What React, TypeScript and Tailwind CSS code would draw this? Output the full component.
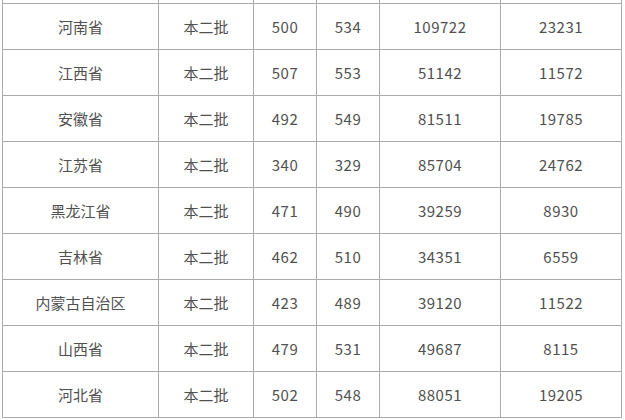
import React from "react";

const rows: string[][] = [
  ["河南省", "本二批", "500", "534", "109722", "23231"],
  ["江西省", "本二批", "507", "553", "51142", "11572"],
  ["安徽省", "本二批", "492", "549", "81511", "19785"],
  ["江苏省", "本二批", "340", "329", "85704", "24762"],
  ["黑龙江省", "本二批", "471", "490", "39259", "8930"],
  ["吉林省", "本二批", "462", "510", "34351", "6559"],
  ["内蒙古自治区", "本二批", "423", "489", "39120", "11522"],
  ["山西省", "本二批", "479", "531", "49687", "8115"],
  ["河北省", "本二批", "502", "548", "88051", "19205"],
];

const widths = ["w-[156px]", "w-[95px]", "w-[63px]", "w-[63px]", "w-[121px]", "w-[122px]"];

export default function App() {
  return (
    <div
      className="w-[625px] h-[420px] bg-white overflow-hidden text-[15px] text-[#505050]"
      style={{ fontFamily: '"Noto Sans CJK SC", "Noto Sans", sans-serif' }}
    >
      <div className="ml-[2px] flex h-[3px]">
        {widths.map((w, i) => (
          <div
            key={i}
            className={`${w} border-l border-[#ababab] ${i === 5 ? "border-r" : ""}`}
          />
        ))}
      </div>
      {rows.map((r, ri) => (
        <div
          key={ri}
          className={`ml-[2px] flex border-t border-[#ababab] ${ri === rows.length - 1 ? "h-[47px] border-b" : "h-[46px]"} w-[620px]`}
        >
          {r.map((c, ci) => (
            <div
              key={ci}
              className={`${widths[ci]} border-l border-[#ababab] ${ci === 5 ? "border-r" : ""} flex items-center justify-center pt-[1px] ${ci >= 2 ? "tracking-[0.5px]" : ""}`}
            >
              {c}
            </div>
          ))}
        </div>
      ))}
    </div>
  );
}
